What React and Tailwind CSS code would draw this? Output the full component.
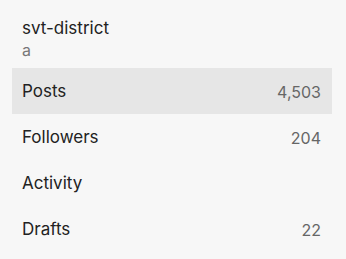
import React from 'react';

const rows = [
  { label: 'Posts', count: '4,503', active: true },
  { label: 'Followers', count: '204' },
  { label: 'Activity', count: '' },
  { label: 'Drafts', count: '22' },
];

export default function App() {
  return (
    <div className="w-[346px] h-[259px] bg-[#f7f7f7] pl-3 pr-[14px] font-['Inter',sans-serif]">
      {/* Header */}
      <div className="px-[10px] pt-[17px] pb-[7px]">
        <div className="text-[17px] leading-[22px] text-[#222]">svt-district</div>
        <div className="text-[16px] leading-[22px] text-[#777]">a</div>
      </div>

      {/* Nav */}
      <div className="flex flex-col">
        {rows.map((row) => (
          <div
            key={row.label}
            className={
              'h-[46px] flex items-center justify-between pl-[10px] pr-[11px] pt-[2px] ' +
              (row.active ? 'bg-[#e6e6e6]' : '')
            }
          >
            <span className="text-[17px] text-[#222]">{row.label}</span>
            <span className="text-[16px] text-[#666]">{row.count}</span>
          </div>
        ))}
      </div>
    </div>
  );
}
